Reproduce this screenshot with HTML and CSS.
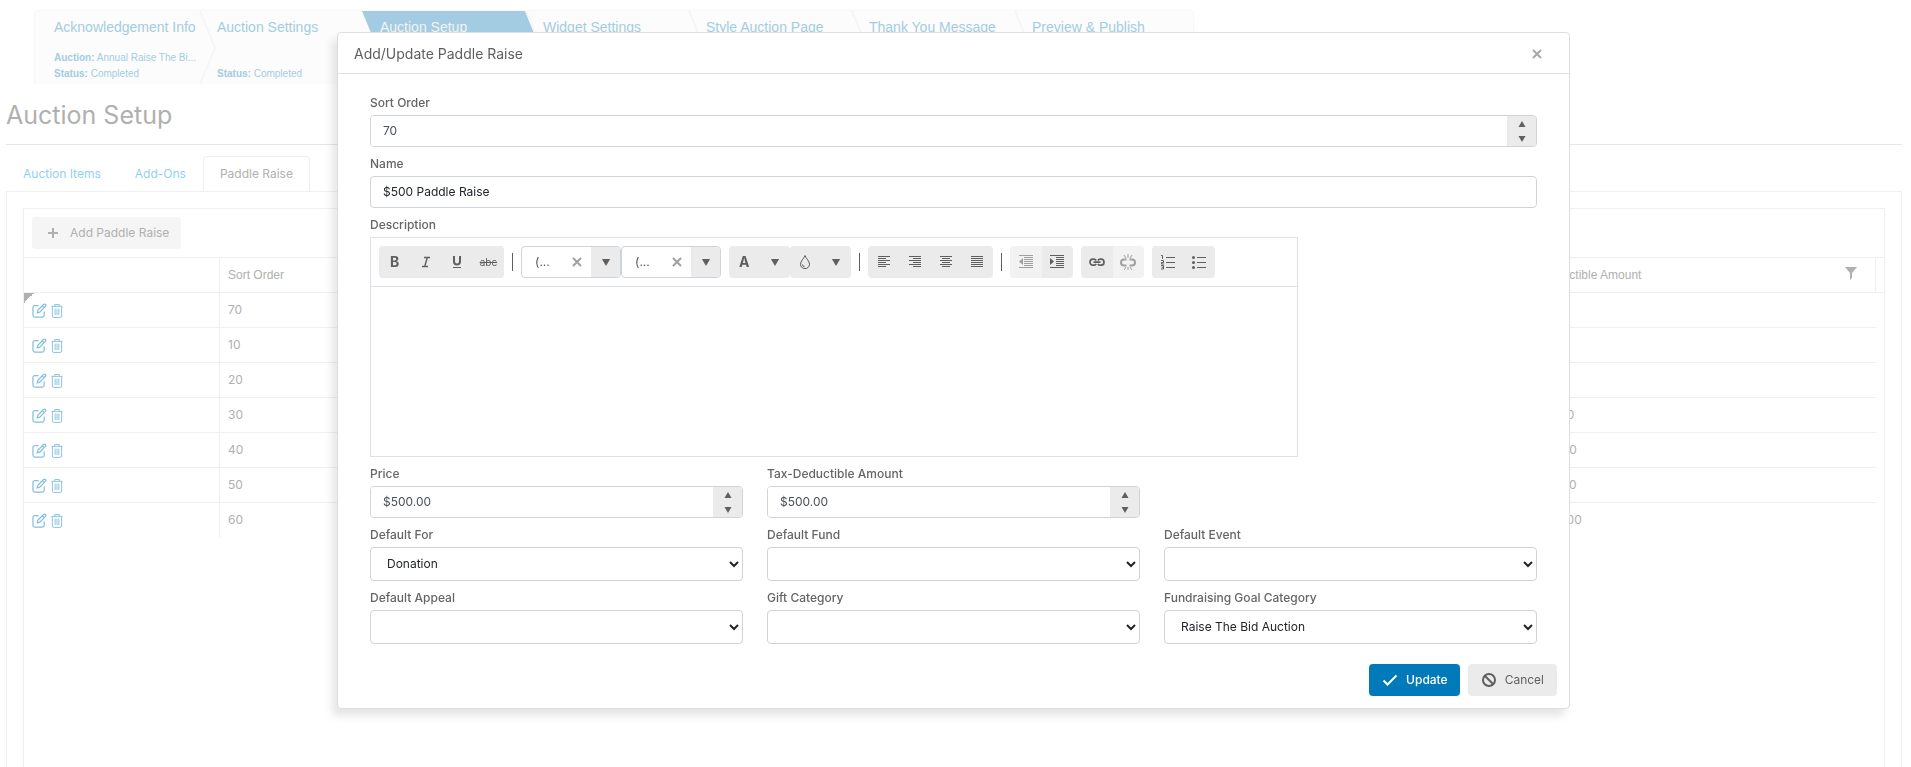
FILE: index.html
```html
<!DOCTYPE html>
<html lang="en">
    <head>
        <meta charset="utf-8">
        <meta name="viewport" content="width=device-width, initial-scale=1.0">
        <title>Auction Setup</title>
        <link rel="stylesheet" href="styles.css">
    </head>
    <body>

        <svg class="symbols" aria-hidden="true">
            <symbol id="edit" viewBox="0 0 16 16"><path d="M7 2.800H3.200A2.100 2.100 0 0 0 1 4.900V13A2.100 2.100 0 0 0 3.100 15H11A2.100 2.100 0 0 0 13 13V9M5.600 10.600L6.200 7.700L12.300 1.600A1.300 1.300 0 0 1 14.300 3.600L8.300 9.800ZM11 3.100L12.900 5" fill="none" stroke="currentColor" stroke-width="1.300"/></symbol>
            <symbol id="trash" viewBox="0 0 13 16"><path d="M.5 3.500H12.500M4 3.500V1.500H9V3.500M1.500 3.500V14Q1.500 15.500 3 15.500H10Q11.500 15.500 11.500 14V3.500M4.500 6V13M6.500 6V13M8.500 6V13" fill="none" stroke="currentColor"/></symbol>
            <symbol id="up" viewBox="0 0 8 6"><path d="M4 0L7.500 6H.5Z" fill="currentColor"/></symbol>
            <symbol id="down" viewBox="0 0 8 6"><path d="M4 6L7.500 0H.5Z" fill="currentColor"/></symbol>
            <symbol id="cross" viewBox="0 0 10 10"><path d="M1 1L9 9M9 1L1 9" fill="none" stroke="currentColor" stroke-width="2"/></symbol>
        </svg>

        <ol class="steps">
            <li class="step step-first"><a href="#">Acknowledgement Info</a><p><b>Auction:</b> Annual Raise The Bi...</p><p><b>Status:</b> Completed</p></li>
            <li class="step"><a href="#">Auction Settings</a><p></p><p><b>Status:</b> Completed</p></li>
            <li class="step active"><a href="#">Auction Setup</a></li>
            <li class="step"><a href="#">Widget Settings</a></li>
            <li class="step"><a href="#">Style Auction Page</a></li>
            <li class="step"><a href="#">Thank You Message</a></li>
            <li class="step step-last"><a href="#">Preview &amp; Publish</a></li>
        </ol>

        <div class="page">
            <h1>Auction Setup</h1>
            <div class="tabs">
                <a class="tab" href="#">Auction Items</a>
                <a class="tab" href="#">Add-Ons</a>
                <a class="tab tab-on" href="#">Paddle Raise</a>
            </div>
            <div class="panel">
                <div class="grid">
                    <div class="grid-bar">
                        <button type="button" class="add-btn"><svg width="10" height="10" viewBox="0 0 10 10"><path d="M5 0V10M0 5H10" stroke="currentColor" stroke-width="2"/></svg>Add Paddle Raise</button>
                    </div>
                    <table>
                        <colgroup><col class="col-cmd"><col><col><col><col class="col-tax"><col class="col-end"></colgroup>
                        <thead>
                            <tr><th></th><th>Sort Order</th><th>Name</th><th>Price</th><th><div class="th-filter">Tax-Deductible Amount<svg width="12" height="13" viewBox="0 0 12 13"><path d="M0 0H12L7 6V11L5 13V6Z" fill="currentColor"/></svg></div></th><th></th></tr>
                        </thead>
                        <tbody>
                            <tr><td class="cmd cmd-mark"><svg><use href="#edit"/></svg><svg class="trash"><use href="#trash"/></svg></td><td>70</td><td></td><td></td><td>$500.00</td><td></td></tr>
                            <tr><td class="cmd"><svg><use href="#edit"/></svg><svg class="trash"><use href="#trash"/></svg></td><td>10</td><td></td><td></td><td>$100.00</td><td></td></tr>
                            <tr><td class="cmd"><svg><use href="#edit"/></svg><svg class="trash"><use href="#trash"/></svg></td><td>20</td><td></td><td></td><td>$250.00</td><td></td></tr>
                            <tr><td class="cmd"><svg><use href="#edit"/></svg><svg class="trash"><use href="#trash"/></svg></td><td>30</td><td></td><td></td><td>$1,000.00</td><td></td></tr>
                            <tr><td class="cmd"><svg><use href="#edit"/></svg><svg class="trash"><use href="#trash"/></svg></td><td>40</td><td></td><td></td><td>$2,500.00</td><td></td></tr>
                            <tr><td class="cmd"><svg><use href="#edit"/></svg><svg class="trash"><use href="#trash"/></svg></td><td>50</td><td></td><td></td><td>$5,000.00</td><td></td></tr>
                            <tr><td class="cmd"><svg><use href="#edit"/></svg><svg class="trash"><use href="#trash"/></svg></td><td>60</td><td></td><td></td><td>$10,000.00</td><td></td></tr>
                        </tbody>
                    </table>
                </div>
            </div>
        </div>

        <div class="overlay">
            <form class="dialog" role="dialog" aria-labelledby="dlgTitle">
                <div class="dialog-head">
                    <h2 id="dlgTitle">Add/Update Paddle Raise</h2>
                    <button type="button" class="close" aria-label="Close"><svg width="10" height="10"><use href="#cross"/></svg></button>
                </div>
                <div class="dialog-body">
                    <div class="field field-wide">
                        <label for="sortOrder">Sort Order</label>
                        <div class="spin">
                            <input type="text" id="sortOrder" value="70">
                            <span class="spin-btns"><button type="button" aria-label="Increase"><svg><use href="#up"/></svg></button><button type="button" aria-label="Decrease"><svg><use href="#down"/></svg></button></span>
                        </div>
                    </div>
                    <div class="field field-wide">
                        <label for="raiseName">Name</label>
                        <input type="text" class="text" id="raiseName" value="$500 Paddle Raise">
                    </div>
                    <div class="field field-wide">
                        <label for="description">Description</label>
                        <div class="editor">
                            <div class="toolbar">
                                <div class="group group-4">
                                    <button type="button" aria-label="Bold"><span class="bold">B</span></button>
                                    <button type="button" aria-label="Italic"><svg viewBox="0 0 16 16"><path d="M6 3.500H12M4 12.500H10M9.300 3.500L6.700 12.500" fill="none" stroke="currentColor" stroke-width="1.400"/></svg></button>
                                    <button type="button" aria-label="Underline"><svg viewBox="0 0 16 16"><path d="M5 2V7.500A3 3 0 0 0 11 7.500V2" fill="none" stroke="currentColor" stroke-width="2"/><path d="M4 13.500H12" stroke="currentColor"/></svg></button>
                                    <button type="button" aria-label="Strikethrough"><s class="strike">abc</s></button>
                                </div>
                                <i class="sep"></i>
                                <div class="combos">
                                    <div class="combo"><span>(...</span><svg class="clear"><use href="#cross"/></svg><button type="button" aria-label="Font name"><svg class="arrow"><use href="#down"/></svg></button></div>
                                    <div class="combo"><span>(...</span><svg class="clear"><use href="#cross"/></svg><button type="button" aria-label="Font size"><svg class="arrow"><use href="#down"/></svg></button></div>
                                </div>
                                <div class="colors">
                                    <div class="group group-color">
                                        <button type="button" aria-label="Text color"><span class="bold">A</span></button>
                                        <button type="button" aria-label="Choose text color"><svg class="arrow"><use href="#down"/></svg></button>
                                    </div>
                                    <div class="group group-color">
                                        <button type="button" aria-label="Background color"><svg viewBox="0 0 16 16"><path d="M8 1.500C7 4.500 3.500 7 3.500 10.300A4.500 4.300 0 0 0 12.500 10.300C12.500 7 9 4.500 8 1.500ZM5.500 10.500A2.500 2.300 0 0 0 7.500 12.800" fill="none" stroke="currentColor"/></svg></button>
                                        <button type="button" aria-label="Choose background color"><svg class="arrow"><use href="#down"/></svg></button>
                                    </div>
                                </div>
                                <i class="sep"></i>
                                <div class="group group-4">
                                    <button type="button" aria-label="Align left"><svg viewBox="0 0 16 16"><path d="M2 2.500H14M2 4.500H10M2 6.500H14M2 8.500H10M2 10.500H14M2 12.500H10" stroke="currentColor"/></svg></button>
                                    <button type="button" aria-label="Align right"><svg viewBox="0 0 16 16"><path d="M2 2.500H14M6 4.500H14M2 6.500H14M6 8.500H14M2 10.500H14M6 12.500H14" stroke="currentColor"/></svg></button>
                                    <button type="button" aria-label="Align center"><svg viewBox="0 0 16 16"><path d="M2 2.500H14M4 4.500H12M2 6.500H14M4 8.500H12M2 10.500H14M4 12.500H12" stroke="currentColor"/></svg></button>
                                    <button type="button" aria-label="Justify"><svg viewBox="0 0 16 16"><path d="M2 2.500H14M2 4.500H14M2 6.500H14M2 8.500H14M2 10.500H14M2 12.500H14" stroke="currentColor"/></svg></button>
                                </div>
                                <i class="sep"></i>
                                <div class="group group-2">
                                    <button type="button" disabled aria-label="Outdent"><svg viewBox="0 0 16 16"><path d="M1 1.500H15M6 3.500H15M6 5.500H15M6 7.500H15M6 9.500H15M6 11.500H15M1 13.500H15" stroke="currentColor"/><path d="M5 4V11L1 7.500Z" fill="currentColor"/></svg></button>
                                    <button type="button" aria-label="Indent"><svg viewBox="0 0 16 16"><path d="M1 1.500H15M7 3.500H15M7 5.500H15M7 7.500H15M7 9.500H15M7 11.500H15M1 13.500H15" stroke="currentColor"/><path d="M1 4V11L5 7.500Z" fill="currentColor"/></svg></button>
                                </div>
                                <div class="group group-2">
                                    <button type="button" aria-label="Insert link"><svg viewBox="0 0 16 16"><path d="M7.200 10A3 3 0 0 1 4.500 11.200H4A3 3 0 0 1 4 5.200H4.500A3 3 0 0 1 7.200 6.400M8.800 6.400A3 3 0 0 1 11.500 5.200H12A3 3 0 0 1 12 11.200H11.500A3 3 0 0 1 8.800 10M4.500 8.200H11.500" fill="none" stroke="currentColor" stroke-width="1.700"/></svg></button>
                                    <button type="button" disabled aria-label="Remove link"><svg viewBox="0 0 16 16"><path d="M6.500 11.500H4A3 3 0 0 1 4 5.500H6.500M9.500 5.500H12A3 3 0 0 1 12 11.500H9.500" fill="none" stroke="currentColor" stroke-width="2"/><path d="M8 0V4M8 13V16M4 1L6 4M12 1L10 4M4 16L6 13M12 16L10 13" stroke="currentColor"/></svg></button>
                                </div>
                                <div class="group group-2">
                                    <button type="button" aria-label="Numbered list"><svg viewBox="0 0 16 16"><path d="M6 3.500H15M6 8.500H15M6 13.500H15M1 1.500H2.500V5M1 6.500H3.500V8.500H1.500V10H4M1 11.500H3.500V15H1M1.500 13.300H3.500" fill="none" stroke="currentColor"/></svg></button>
                                    <button type="button" aria-label="Bulleted list"><svg viewBox="0 0 16 16"><path d="M6 3.500H15M6 8.500H15M6 13.500H15" stroke="currentColor"/><circle cx="2.500" cy="3.500" r="1.500" fill="currentColor"/><circle cx="2.500" cy="8.500" r="1.500" fill="currentColor"/><circle cx="2.500" cy="13.500" r="1.500" fill="currentColor"/></svg></button>
                                </div>
                            </div>
                            <textarea id="description"></textarea>
                        </div>
                    </div>
                    <div class="field">
                        <label for="price">Price</label>
                        <div class="spin">
                            <input type="text" id="price" value="$500.00">
                            <span class="spin-btns"><button type="button" aria-label="Increase"><svg><use href="#up"/></svg></button><button type="button" aria-label="Decrease"><svg><use href="#down"/></svg></button></span>
                        </div>
                    </div>
                    <div class="field">
                        <label for="taxAmount">Tax-Deductible Amount</label>
                        <div class="spin">
                            <input type="text" id="taxAmount" value="$500.00">
                            <span class="spin-btns"><button type="button" aria-label="Increase"><svg><use href="#up"/></svg></button><button type="button" aria-label="Decrease"><svg><use href="#down"/></svg></button></span>
                        </div>
                    </div>
                    <div class="field field-start">
                        <label for="defaultFor">Default For</label>
                        <select id="defaultFor"><option>Donation</option></select>
                    </div>
                    <div class="field">
                        <label for="defaultFund">Default Fund</label>
                        <select id="defaultFund"><option></option></select>
                    </div>
                    <div class="field">
                        <label for="defaultEvent">Default Event</label>
                        <select id="defaultEvent"><option></option></select>
                    </div>
                    <div class="field">
                        <label for="defaultAppeal">Default Appeal</label>
                        <select id="defaultAppeal"><option></option></select>
                    </div>
                    <div class="field">
                        <label for="giftCategory">Gift Category</label>
                        <select id="giftCategory"><option></option></select>
                    </div>
                    <div class="field">
                        <label for="goalCategory">Fundraising Goal Category</label>
                        <select id="goalCategory"><option>Raise The Bid Auction</option></select>
                    </div>
                </div>
                <div class="dialog-foot">
                    <button type="submit" class="btn btn-primary"><svg viewBox="0 0 16 16"><path d="M1.500 8.500L5.500 12.500L14.500 3.500" fill="none" stroke="currentColor" stroke-width="2"/></svg>Update</button>
                    <button type="button" class="btn"><svg viewBox="0 0 16 16"><circle cx="8" cy="8" r="6" fill="none" stroke="currentColor" stroke-width="2"/><path d="M4 4L12 12" stroke="currentColor" stroke-width="2"/></svg>Cancel</button>
                </div>
            </form>
        </div>

    </body>
</html>
```
FILE: styles.css
```css
*
{
    box-sizing: border-box;
}

body
{
    margin: 0;
    height: 100vh;
    overflow: hidden;
    display: flex;
    flex-direction: column;
    background: #ffffff;
    color: #b0b0b0;
    font: 12px/16px Inter, "Liberation Sans", sans-serif;
}

button, input, select, textarea
{
    margin: 0;
    font: inherit;
    color: inherit;
}

button
{
    border: 0;
    padding: 0;
    background: none;
}

a
{
    text-decoration: none;
}

.symbols
{
    position: absolute;
    width: 0;
    height: 0;
}

/* wizard steps */
.steps
{
    display: flex;
    flex: none;
    align-self: flex-start;
    list-style: none;
    height: 74px;
    margin: 10px 0 0 34px;
    padding: 0;
    background: #fcfcfc;
    border: 1px solid #f7f7f7;
    border-bottom: 0;
    border-radius: 4px 4px 0 0;
    color: #a3cce2;
    font-family: "Liberation Sans", sans-serif;
}

.step
{
    position: relative;
    width: 163px;
    padding: 8px 0 0 18px;
}

.step a
{
    position: relative;
    display: block;
    margin-bottom: 15px;
    color: #a3cce2;
    font-size: 14px;
    white-space: nowrap;
}

.step p
{
    height: 16px;
    margin: 0;
    font-size: 10px;
    white-space: nowrap;
}

.step-first
{
    width: 164px;
    padding-left: 19px;
}

.step-last
{
    width: 179px;
}

.step:not(.step-last)::after
{
    content: "";
    position: absolute;
    top: 0;
    bottom: 0;
    left: 100%;
    width: 17px;
    background: #f5f5f5;
    clip-path: polygon(0 0, 2px 0, 100% 50%, 2px 100%, 0 100%, 15px 50%);
}

.step.active::before
{
    content: "";
    position: absolute;
    top: 0;
    bottom: 0;
    left: 0;
    right: -15px;
    background: #a3cce2;
    clip-path: polygon(0 0, calc(100% - 15px) 0, 100% 50%, calc(100% - 15px) 100%, 0 100%, 15px 50%);
}

.step.active a
{
    color: #f3f3f3;
}

/* page */
.page
{
    flex: 1;
    display: flex;
    flex-direction: column;
    padding: 0 9px 0 6px;
}

h1
{
    margin: 0 0 11px;
    padding: 14px 0 12px;
    border-bottom: 1px solid #e6e6e6;
    font-size: 25px;
    font-weight: 400;
    line-height: 34px;
}

.tabs
{
    display: flex;
}

.tab
{
    padding: 9px 16px;
    border: 1px solid transparent;
    border-bottom: 0;
    border-radius: 4px 4px 0 0;
    color: #8ed2f2;
}

.tab-on
{
    margin-bottom: -1px;
    padding-bottom: 10px;
    background: #ffffff;
    border-color: #efefef;
    color: #b0b0b0;
}

.panel
{
    flex: 1;
    display: flex;
    padding: 16px 16px 0;
    border: 1px solid #efefef;
    border-bottom: 0;
}

.grid
{
    flex: 1;
    border: 1px solid #efefef;
    border-bottom: 0;
}

.grid-bar
{
    padding: 8px;
    border-bottom: 1px solid #efefef;
}

.add-btn
{
    display: flex;
    align-items: center;
    gap: 12px;
    height: 32px;
    padding: 0 12px 0 16px;
    border-radius: 4px;
    background: #f5f5f5;
}

table
{
    width: 100%;
    table-layout: fixed;
    border-collapse: separate;
    border-spacing: 0;
}

.col-cmd
{
    width: 196px;
}

.col-tax
{
    width: 366px;
}

.col-end
{
    width: 8px;
}

th, td
{
    height: 35px;
    padding: 0 8px;
    border-bottom: 1px solid #efefef;
    border-right: 1px solid #efefef;
    font-weight: 400;
    text-align: left;
}

th
{
    font-family: "Liberation Sans", sans-serif;
}

th:last-child, td:last-child
{
    padding: 0;
    border-right: 0;
}

td:last-child, tr:last-child td
{
    border-bottom: 0;
}

tbody tr:last-child td
{
    height: 34px;
}

td:nth-child(5)
{
    border-right: 0;
}

.th-filter
{
    display: flex;
    justify-content: space-between;
    padding-right: 10px;
}

.cmd svg
{
    display: inline-block;
    width: 15px;
    height: 15px;
    margin-right: 4px;
    color: #84bfdd;
    vertical-align: middle;
}

.cmd .trash
{
    width: 12px;
}

.cmd-mark
{
    background: linear-gradient(135deg, #b0b0b0 50%, transparent 50%) 0 0 / 10px 10px no-repeat;
}

/* dialog */
.overlay
{
    position: fixed;
    top: 0;
    left: 0;
    right: 0;
    padding: 32px 4px 0 0;
}

.dialog
{
    width: 100%;
    max-width: 1233px;
    margin: 0 auto;
    background: #ffffff;
    border: 1px solid #dbdfe3;
    border-radius: 4px;
    box-shadow: -5px 7px 8px rgba(0, 0, 0, 0.1);
    color: #5f5f5f;
}

.dialog-head
{
    display: flex;
    align-items: center;
    justify-content: space-between;
    height: 41px;
    padding: 1px 27px 0 16px;
    border-bottom: 1px solid #dee2e6;
}

.dialog-head h2
{
    margin: 0;
    font-size: 14px;
    font-weight: 400;
}

.close
{
    display: flex;
    color: #a8a8a8;
}

.dialog-body
{
    display: grid;
    grid-template-columns: repeat(3, 1fr);
    column-gap: 24px;
    padding: 12px 32px 20px;
}

.field
{
    min-width: 0;
}

.field-wide
{
    grid-column: 1 / -1;
}

.field-start
{
    grid-column-start: 1;
}

.field label
{
    display: block;
    padding: 9px 0 4px;
    color: #656565;
    font-weight: 500;
}

.text, .spin, select
{
    display: block;
    width: 100%;
    height: 32px;
    border: 1px solid #ced4da;
    border-radius: 4px;
    background: #ffffff;
}

.text
{
    padding: 0 12px 1px;
    color: #212529;
}

select
{
    height: 34px;
    padding: 0 12px 1px;
    color: #212529;
}

.spin
{
    display: flex;
    overflow: hidden;
}

.spin input
{
    flex: 1;
    min-width: 0;
    padding: 0 12px;
    border: 0;
    color: #495057;
}

.spin-btns
{
    display: flex;
    flex-direction: column;
    width: 29px;
    background: #ebebeb;
}

.spin-btns button
{
    flex: 1;
    display: flex;
    align-items: center;
    justify-content: center;
}

.spin-btns svg, .arrow
{
    width: 8px;
    height: 6px;
}

.editor
{
    max-width: 928px;
    border: 1px solid #dee2e6;
}

.toolbar
{
    display: flex;
    align-items: center;
    gap: 8px;
    padding: 8px;
    border-bottom: 1px solid #dee2e6;
}

.group
{
    display: flex;
    height: 32px;
    border-radius: 4px;
    background: #ebebeb;
    overflow: hidden;
}

.group-4
{
    width: 125px;
}

.group-2
{
    width: 63px;
}

.group-color
{
    width: 61px;
}

.group button
{
    flex: 1;
    display: flex;
    align-items: center;
    justify-content: center;
}

.group button:disabled
{
    background: #f2f2f2;
    color: #a0a0a0;
}

.group svg
{
    width: 16px;
    height: 16px;
}

.group .arrow
{
    width: 10px;
    height: 7px;
}

.bold
{
    font-size: 14px;
    font-weight: 700;
}

.strike
{
    font-size: 10px;
}

.sep
{
    width: 1px;
    height: 18px;
    background: #5f5f5f;
}

.combos, .colors
{
    display: flex;
}

.combo
{
    display: flex;
    align-items: center;
    width: 100px;
    height: 32px;
    padding-left: 13px;
    border: 1px solid #ced4da;
    border-radius: 4px;
    overflow: hidden;
    color: #495057;
}

.combo span
{
    flex: 1;
}

.clear
{
    width: 10px;
    height: 10px;
    margin-right: 9px;
    color: #a0a0a0;
}

.combo button
{
    display: flex;
    align-items: center;
    justify-content: center;
    width: 29px;
    height: 30px;
    background: #ebebeb;
    color: #5f5f5f;
}

.combo .arrow
{
    width: 10px;
    height: 7px;
}

.editor textarea
{
    display: block;
    width: 100%;
    height: 169px;
    padding: 8px;
    border: 0;
    resize: none;
}

.dialog-foot
{
    display: flex;
    justify-content: flex-end;
    gap: 8px;
    padding: 0 12px 12px;
}

.btn
{
    display: flex;
    align-items: center;
    gap: 8px;
    height: 32px;
    padding: 0 13px;
    border-radius: 4px;
    background: #ebebeb;
}

.btn svg
{
    width: 16px;
    height: 16px;
}

.btn-primary
{
    padding-right: 12px;
    background: #007ab9;
    color: #ffffff;
    font-weight: 500;
}
```
